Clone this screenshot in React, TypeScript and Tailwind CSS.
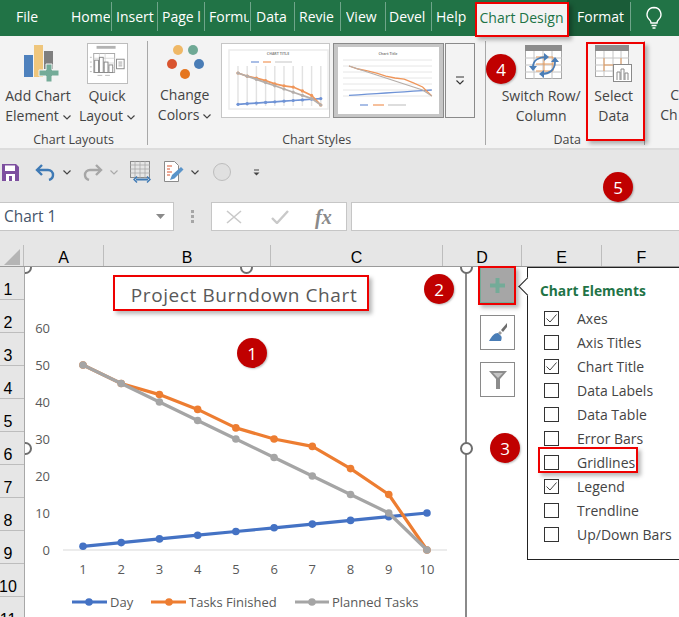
import React from "react";

const tabs: [string, number, number][] = [
  ["File", 16, 30],
  ["Home", 71, 39],
  ["Insert", 116, 40],
  ["Page l", 162, 41],
  ["Formu", 209, 40],
  ["Data", 256, 37],
  ["Revie", 299, 40],
  ["View", 346, 38],
  ["Devel", 389, 41],
  ["Help", 436, 38],
];

function Badge({ n, x, y }: { n: number; x: number; y: number }) {
  return (
    <div
      className="absolute w-[30px] h-[30px] rounded-full bg-[#c00000] text-white flex items-center justify-center text-[17px] leading-none shadow-[1px_1px_2px_rgba(0,0,0,0.25)]"
      style={{ left: x - 15, top: y - 15 }}
    >
      {n}
    </div>
  );
}

function RedBox({ x, y, w, h }: { x: number; y: number; w: number; h: number }) {
  return (
    <div
      className="absolute border-[2px] border-[#ee0000] shadow-[3px_3px_4px_rgba(0,0,0,0.28)] pointer-events-none"
      style={{ left: x, top: y, width: w, height: h }}
    />
  );
}

function Thumb({ second }: { second?: boolean }) {
  const x0 = second ? 14 : 16;
  const step = 9.2;
  const zero = second ? 52 : 61;
  const k = second ? 0.6 : 0.64;
  const xs = [0, 1, 2, 3, 4, 5, 6, 7, 8, 9].map((i) => x0 + i * step);
  const o = [50, 45, 42, 38, 33, 30, 28, 22, 15, 0];
  const g = [50, 45, 40, 35, 30, 25, 20, 15, 10, 0];
  const d = [1, 2, 3, 4, 5, 6, 7, 8, 9, 10];
  const toY = (v: number) => zero - v * k;
  const pts = (a: number[]) => a.map((v, i) => `${xs[i]},${toY(v)}`).join(" ");
  const series: [number[], string][] = [
    [d, "#6f93d6"],
    [o, "#f0965a"],
    [g, "#b5aeaa"],
  ];
  return (
    <svg viewBox="0 0 107 73" className="block w-full h-full">
      {second ? (
        <g>
          <rect x="0" y="0" width="107" height="73" fill="#c6c6c6" />
          <rect x="3" y="3" width="101" height="67" fill="#fff" />
        </g>
      ) : (
        <rect x="7" y="6" width="99" height="59" fill="#fff" stroke="#ececec" strokeWidth="1.5" />
      )}
      <text x={second ? 53 : 56} y="11" textAnchor="middle" fontSize="3.6" fontWeight="700" fill="#888" fontFamily="Open Sans">
        {second ? "Chart Title" : "CHART TITLE"}
      </text>
      {!second &&
        xs.map((x) => <line key={x} x1={x} x2={x} y1="22" y2="62" stroke="#e2e2e2" strokeWidth="1.4" />)}
      {second &&
        [0, 1, 2, 3, 4, 5, 6].map((i) => (
          <line key={i} x1="8" x2="97" y1={52 - i * 6} y2={52 - i * 6} stroke="#e6e6e6" strokeWidth="1" />
        ))}
      {series.map(([a, c]) => (
        <g key={c}>
          <polyline points={pts(a)} fill="none" stroke={c} strokeWidth={second ? 1.3 : 1.7} />
          {!second && a.map((v, i) => <circle key={i} cx={xs[i]} cy={toY(v)} r="1.6" fill={c} />)}
        </g>
      ))}
      {!second && (
        <g>
          <line x1="29" x2="37" y1="18" y2="18" stroke="#6f93d6" strokeWidth="1.2" />
          <line x1="41" x2="49" y1="18" y2="18" stroke="#f0965a" strokeWidth="1.2" />
          <line x1="53" x2="70" y1="18" y2="18" stroke="#cfcfcf" strokeWidth="1.2" />
        </g>
      )}
      {second && (
        <g>
          <line x1="25" x2="33" y1="61" y2="61" stroke="#6f93d6" strokeWidth="1.2" />
          <line x1="38" x2="49" y1="61" y2="61" stroke="#f0965a" strokeWidth="1.2" />
          <line x1="53" x2="71" y1="61" y2="61" stroke="#bbb" strokeWidth="1" />
        </g>
      )}
    </svg>
  );
}

function Caret({ light }: { light?: boolean }) {
  return (
    <svg width="8" height="5" viewBox="0 0 8 5" className="inline-block ml-[4px] align-middle">
      <path d="M0.5 0.5 L4 4 L7.5 0.5" fill="none" stroke={light ? "#aaa" : "#444"} strokeWidth="1.2" />
    </svg>
  );
}

const rows = ["1", "2", "3", "4", "5", "6", "7", "8", "9", "10", "11"];
const cols: [string, number][] = [["A", 80], ["B", 167], ["C", 172], ["D", 79], ["E", 80], ["F", 80]];
const elements: [string, boolean][] = [
  ["Axes", true],
  ["Axis Titles", false],
  ["Chart Title", true],
  ["Data Labels", false],
  ["Data Table", false],
  ["Error Bars", false],
  ["Gridlines", false],
  ["Legend", true],
  ["Trendline", false],
  ["Up/Down Bars", false],
];

function Chart() {
  const X = (i: number) => 58 + i * 38.22;
  const Y = (v: number) => 283 - v * 3.7;
  const day = [1, 2, 3, 4, 5, 6, 7, 8, 9, 10];
  const done = [50, 45, 42, 38, 33, 30, 28, 22, 15, 0];
  const plan = [50, 45, 40, 35, 30, 25, 20, 15, 10, 0];
  const ser: [number[], string][] = [
    [day, "#4472c4"],
    [done, "#ed7d31"],
    [plan, "#a5a5a5"],
  ];
  const font = "Open Sans, sans-serif";
  return (
    <svg width="442" height="350" viewBox="0 0 442 350" className="block">
      {[0, 10, 20, 30, 40, 50, 60].map((v) => (
        <text key={v} x="25" y={Y(v) + 5} textAnchor="end" fontSize="13" fill="#595959" fontFamily={font}>
          {v}
        </text>
      ))}
      <line x1="38" x2="422" y1="283" y2="283" stroke="#d9d9d9" strokeWidth="1" />
      {day.map((d, i) => (
        <text key={d} x={X(i)} y="307" textAnchor="middle" fontSize="13" fill="#595959" fontFamily={font}>
          {d}
        </text>
      ))}
      {ser.map(([a, c]) => (
        <g key={c}>
          <polyline
            points={a.map((v, i) => `${X(i)},${Y(v)}`).join(" ")}
            fill="none"
            stroke={c}
            strokeWidth="3.2"
            strokeLinejoin="round"
          />
          {a.map((v, i) => (
            <circle key={i} cx={X(i)} cy={Y(v)} r="3.8" fill={c} />
          ))}
        </g>
      ))}
      {(
        [
          [47, 82, 64, "#4472c4", "Day", 85],
          [126, 161, 144, "#ed7d31", "Tasks Finished", 164],
          [270, 304, 287, "#a5a5a5", "Planned Tasks", 307],
        ] as [number, number, number, string, string, number][]
      ).map(([a, b, m, c, t, tx]) => (
        <g key={t}>
          <line x1={a} x2={b} y1="335" y2="335" stroke={c} strokeWidth="3.2" />
          <circle cx={m} cy="335" r="3.8" fill={c} />
          <text x={tx} y="340" fontSize="13" fill="#595959" fontFamily={font}>
            {t}
          </text>
        </g>
      ))}
    </svg>
  );
}

function Handle({ x, y }: { x: number; y: number }) {
  return (
    <div
      className="absolute w-[13px] h-[13px] rounded-full bg-white border-[2px] border-[#6e6e6e]"
      style={{ left: x - 6.5, top: y - 6.5 }}
    />
  );
}

export default function App() {
  return (
    <div className="relative w-[679px] h-[617px] overflow-hidden bg-[#e6e6e6] font-['Open_Sans',sans-serif] text-[#444]">
      {/* Tabs */}
      <div className="relative h-[36px] bg-[#217346] text-white text-[14px] leading-[34px]">
        {tabs.map(([t, x, w]) => (
          <div key={t} className="absolute top-0 overflow-hidden whitespace-nowrap" style={{ left: x, width: w }}>
            {t}
          </div>
        ))}
        {[111, 157, 204, 250, 294, 340, 385, 431, 630].map((x) => (
          <div key={x} className="absolute top-[2px] h-[29px] w-px bg-[#6fa58a]" style={{ left: x }} />
        ))}
        <div className="absolute left-[476px] top-[2px] w-[91px] h-[34px] bg-[#f3f3f3] text-[#217346] text-center whitespace-nowrap leading-[32px]">
          Chart Design
        </div>
        <div className="absolute left-[567px] top-0 w-[63px] h-[36px] bg-[#1a5c38] pl-[10px]">Format</div>
        <svg className="absolute left-[645px] top-[6px]" width="18" height="24" viewBox="0 0 18 24">
          <path
            d="M9 1.5a7 7 0 0 0-4.5 12.3c1 .9 1.5 2 1.5 3.2h6c0-1.2.5-2.3 1.5-3.2A7 7 0 0 0 9 1.5z"
            fill="none"
            stroke="#fff"
            strokeWidth="1.4"
          />
          <path d="M6.5 19.5h5M7.5 22h3" stroke="#fff" strokeWidth="1.4" />
        </svg>
      </div>

      {/* Ribbon */}
      <div className="h-[114px] bg-[#f3f3f3] border-b-[2px] border-[#dcdcdc] flex text-[14px] leading-[20px] text-[#444]">
        {/* Chart layouts */}
        <div className="w-[149px] h-[104px] mt-[5px] border-r-[1px] border-[#a8a8a8] flex flex-col">
          <div className="flex h-[88px] shrink-0">
            <div className="w-[76px] flex flex-col items-center">
              <svg width="38" height="38" viewBox="0 0 38 38" className="shrink-0 mt-[3px] ml-[5px] mb-[4px]">
                <rect x="2" y="11" width="9" height="22" fill="#4e81bd" />
                <rect x="12" y="1" width="9" height="32" fill="#efc67c" />
                <rect x="22" y="7" width="9" height="18" fill="#7f7f7f" />
                <path d="M24 20h6v6h7v6h-7v6h-6v-6h-7v-6h7z" fill="#74ab98" stroke="#f3f3f3" strokeWidth="1" />
              </svg>
              <div className="text-center whitespace-nowrap">
                Add Chart
                <br />
                Element
                <Caret />
              </div>
            </div>
            <div className="w-[62px] flex flex-col items-center">
              <svg width="41" height="41" viewBox="0 0 41 41" className="shrink-0 mt-[2px] mb-[2px] bg-white border border-[#bdbdbd]">
                <rect x="9" y="2" width="20" height="3" fill="#b3b3b3" />
                <rect x="6" y="10" width="22" height="20" fill="#fff" stroke="#a8a8a8" />
                <path d="M6 15h22M6 20h22M6 25h22M12 10v20M18 10v20" stroke="#cfcfcf" strokeWidth="0.8" />
                <rect x="7" y="17" width="4" height="13" fill="#fff" stroke="#888" />
                <rect x="12" y="14" width="4" height="16" fill="#fff" stroke="#888" />
                <rect x="17" y="19" width="4" height="11" fill="#fff" stroke="#888" />
                <rect x="22" y="22" width="4" height="8" fill="#fff" stroke="#888" />
                <rect x="30" y="16" width="8" height="10" fill="#fff" stroke="#888" />
                <path d="M32 19h4M32 21h4M32 23h4" stroke="#888" strokeWidth="0.8" />
                <path d="M2 14h2M2 19h2M2 24h2M2 29h2M10 33h5M18 33h5" stroke="#bbb" strokeWidth="1" />
              </svg>
              <div className="text-center whitespace-nowrap">
                Quick
                <br />
                Layout
                <Caret />
              </div>
            </div>
          </div>
          <div className="text-[12.5px] text-center mt-[1px]">Chart Layouts</div>
        </div>

        {/* Chart styles */}
        <div className="w-[340px] h-[104px] mt-[5px] border-r-[1px] border-[#a8a8a8] flex flex-col">
          <div className="flex h-[88px] shrink-0">
            <div className="w-[73px] flex flex-col items-center">
              <svg width="40" height="36" viewBox="0 0 40 36" className="shrink-0 mt-[3px] mb-[5px]">
                <circle cx="13" cy="6" r="5" fill="#efb866" />
                <circle cx="28" cy="6" r="5" fill="#6fa995" />
                <circle cx="7" cy="20" r="5" fill="#d9542f" />
                <circle cx="34" cy="20" r="5" fill="#4a7db6" />
                <circle cx="20" cy="30" r="5" fill="#e5761e" />
              </svg>
              <div className="text-center whitespace-nowrap">
                Change
                <br />
                Colors
                <Caret />
              </div>
            </div>
            <div className="w-[109px] h-[75px] mt-[2px] bg-white border border-[#c6c6c6]">
              <Thumb />
            </div>
            <div className="w-[111px] h-[75px] mt-[2px] ml-[3px] bg-[#c6c6c6] border border-[#8a8a8a]">
              <Thumb second />
            </div>
            <div className="w-[30px] h-[75px] mt-[2px] ml-[1px] bg-[#f3f3f3] border border-[#8a8a8a] flex items-center justify-center">
              <svg width="10" height="10" viewBox="0 0 10 10">
                <path d="M1 1h8" stroke="#333" strokeWidth="1" />
                <path d="M1.5 4.5 L5 8 L8.5 4.5" fill="none" stroke="#333" strokeWidth="1.1" />
              </svg>
            </div>
          </div>
          <div className="text-[12.5px] text-center mt-[1px]">Chart Styles</div>
        </div>

        {/* Data */}
        <div className="w-[159px] h-[104px] mt-[5px] border-r-[1px] border-[#a8a8a8] flex flex-col">
          <div className="flex h-[88px] shrink-0">
            <div className="w-[98px] flex flex-col items-center">
              <svg width="38" height="35" viewBox="0 0 38 35" className="shrink-0 mt-[4px] mb-[6px] ml-[18px]">
                <rect x="0.5" y="0.5" width="36" height="33" fill="#fff" stroke="#a8a8a8" />
                <rect x="0" y="0" width="37" height="6" fill="#8c8c8c" />
                <path d="M9 6v28M18 6v28M27 6v28M0 13h37M0 20h37M0 27h37" stroke="#c4c4c4" strokeWidth="1" />
                <path d="M11 12h17v14H11M19 12v14M11 19h17" fill="none" stroke="#e39a5d" strokeWidth="1" />
                <path d="M8 22C8 15 14 12 21 12M17 29c7 0 13-4 13-12" fill="none" stroke="#4a7db6" strokeWidth="1.8" />
                <path d="M19 8l5 4-5 4zM4 21l4 5 4-5zM19 25l-5 4 5 4zM26 17l4-5 4 5z" fill="#4a7db6" />
              </svg>
              <div className="text-center whitespace-nowrap ml-[12px]">
                Switch Row/
                <br />
                Column
              </div>
            </div>
            <div className="w-[60px] flex flex-col items-center">
              <svg width="38" height="38" viewBox="0 0 38 38" className="shrink-0 mt-[4px] mb-[3px]">
                <rect x="0.5" y="0.5" width="33" height="31" fill="#fff" stroke="#a8a8a8" />
                <rect x="0" y="0" width="34" height="6" fill="#8c8c8c" />
                <path d="M9 6v26M18 6v26M26 6v26M0 13h34M0 20h34M0 26h34" stroke="#c4c4c4" strokeWidth="1" />
                <path d="M9 13v13M9 20h17M26 13v7" fill="none" stroke="#e39a5d" strokeWidth="1" />
                <rect x="18.5" y="19.5" width="18" height="17" fill="#fff" stroke="#8a8a8a" />
                <path d="M22 35v-8h3v8M26 35V24h3v11M30 35v-7h3v7" fill="none" stroke="#8a8a8a" strokeWidth="1" />
              </svg>
              <div className="text-center whitespace-nowrap -ml-[1px]">
                Select
                <br />
                Data
              </div>
            </div>
          </div>
          <div className="text-[12.5px] text-center mt-[1px] pl-[4px]">Data</div>
        </div>

        <div className="pl-[15px] pt-[49px] whitespace-nowrap">
          <div className="pl-[10px]">C</div>
          <div>Ch</div>
        </div>
      </div>

      {/* Quick access */}
      <div className="h-[52px] flex items-center pb-[8px] pl-[2px]">
        <svg width="17" height="17" viewBox="0 0 17 17">
          <path d="M0 0h14l3 3v14H0z" fill="#7d4f9f" />
          <rect x="3" y="1.5" width="10" height="5.5" fill="#fff" />
          <rect x="4" y="10" width="9" height="7" fill="#fff" />
          <rect x="7" y="12" width="3" height="5" fill="#7d4f9f" />
        </svg>
        <svg width="22" height="18" viewBox="0 0 22 18" className="ml-[16px]">
          <path d="M7 2L2 7l5 5" fill="none" stroke="#3f7ab5" strokeWidth="2.4" />
          <path d="M3 7h10a5 5 0 0 1 5 5c0 2-1 4-4 5" fill="none" stroke="#3f7ab5" strokeWidth="2.4" />
        </svg>
        <span className="ml-[2px] flex"><Caret /></span>
        <svg width="22" height="18" viewBox="0 0 22 18" className="ml-[10px]">
          <path d="M15 2l5 5-5 5" fill="none" stroke="#a6a6a6" strokeWidth="2.4" />
          <path d="M19 7H9a5 5 0 0 0-5 5c0 2 1 4 4 5" fill="none" stroke="#a6a6a6" strokeWidth="2.4" />
        </svg>
        <span className="ml-[3px] flex"><Caret light /></span>
        <svg width="22" height="22" viewBox="0 0 22 22" className="ml-[12px]">
          <rect x="0.5" y="0.5" width="19" height="16" fill="none" stroke="#8a8a8a" />
          <path d="M0 4h20M0 8h20M0 12h20M5 0v17M10 0v17M15 0v17" stroke="#a8a8a8" strokeWidth="0.8" />
          <path d="M6 18.5h12" stroke="#3f7ab5" strokeWidth="2" />
          <path d="M7 15.5l-3 3 3 3M17 15.5l3 3-3 3" fill="none" stroke="#3f7ab5" strokeWidth="1.4" />
        </svg>
        <svg width="20" height="22" viewBox="0 0 20 22" className="ml-[12px]">
          <path d="M0.5 0.5h10l4 4v16H0.5z" fill="#fff" stroke="#8a8a8a" />
          <path d="M3 5h5M3 8h3M3 11h5M3 14h3" stroke="#d9542f" strokeWidth="1" />
          <path d="M6 19l2-5 9-8 2.5 2.5-9 9z" fill="#5a94c9" />
        </svg>
        <span className="ml-[3px] flex"><Caret /></span>
        <div className="ml-[14px] w-[18px] h-[18px] rounded-full bg-[#e0e0e0] border border-[#bdbdbd]" />
        <svg width="7" height="7" viewBox="0 0 7 7" className="ml-[22px]">
          <path d="M1 1h5" stroke="#444" strokeWidth="1" />
          <path d="M0.5 3.5h6L3.5 6.5z" fill="#444" />
        </svg>
      </div>

      {/* Formula bar */}
      <div className="h-[29px] flex text-[15.4px]">
        <div className="w-[174px] h-[29px] bg-white border border-l-0 border-[#c6c6c6] flex items-center justify-between pl-[4px] pr-[8px] text-[#44546a]">
          Chart 1
          <svg width="9" height="5" viewBox="0 0 9 5"><path d="M0 0h9L4.5 5z" fill="#8a8a8a" /></svg>
        </div>
        <div className="w-[37px] flex flex-col items-center justify-center gap-[2px]">
          <div className="w-[3px] h-[3px] bg-[#a6a6a6]" />
          <div className="w-[3px] h-[3px] bg-[#a6a6a6]" />
          <div className="w-[3px] h-[3px] bg-[#a6a6a6]" />
        </div>
        <div className="w-[136px] bg-white border border-[#c6c6c6] flex items-center">
          <svg width="16" height="14" viewBox="0 0 16 14" className="ml-[14px]">
            <path d="M1 1l14 12M15 1L1 13" stroke="#c9c9c9" strokeWidth="1.6" />
          </svg>
          <svg width="18" height="14" viewBox="0 0 18 14" className="ml-[29px]">
            <path d="M1 8l5 5L17 1" fill="none" stroke="#c9c9c9" strokeWidth="2.4" />
          </svg>
          <span className="ml-[26px] font-['Liberation_Serif',serif] italic font-bold text-[20px] text-[#8a8a8a]">fx</span>
        </div>
        <div className="w-[1px] ml-[3px]" />
        <div className="flex-1 bg-white border border-r-0 border-[#c6c6c6]" />
      </div>

      {/* Column headers */}
      <div className="h-[36px] pt-[14px] flex items-stretch border-b-[1px] border-[#9a9a9a]">
        <div className="w-[24px] shrink-0 h-[21px] relative border-r border-[#bdbdbd]">
          <div className="absolute right-[3px] bottom-[1px] w-0 h-0 border-l-[16px] border-l-transparent border-b-[16px] border-b-[#b5b5b5]" />
        </div>
        {cols.map(([c, w]) => (
          <div
            key={c}
            className="shrink-0 h-[21px] pt-[4px] flex items-center justify-center border-r border-[#bdbdbd] text-[16px] text-black font-['Liberation_Sans',sans-serif]"
            style={{ width: w }}
          >
            {c}
          </div>
        ))}
      </div>

      {/* Sheet */}
      <div className="flex h-[350px]">
        <div className="w-[25px] shrink-0 bg-[#e6e6e6] border-r border-[#a8a8a8] overflow-hidden">
          {rows.map((r) => (
            <div
              key={r}
              className="h-[33px] border-b border-[#bdbdbd] flex items-center justify-center pt-[13px] pr-[8px] text-[16px] text-black font-['Liberation_Sans',sans-serif]"
            >
              {r}
            </div>
          ))}
        </div>
        <div className="relative flex-1 bg-white overflow-hidden">
          <div className="absolute left-0 top-0 w-[442px] h-[350px] border-r-[2px] border-[#8a8a8a]">
            <Chart />
            <div className="absolute left-[94px] top-[10px] w-[250px] text-center text-[19px] tracking-[0.6px] text-[#595959] leading-[36px] whitespace-nowrap">
              Project Burndown Chart
            </div>
          </div>
          <Handle x={0} y={0} />
          <Handle x={221} y={0} />
          <Handle x={441} y={0} />
          <Handle x={0} y={181} />
          <Handle x={441} y={181} />

          {/* chart buttons */}
          <div className="absolute left-[455px] top-0 w-[35px] flex flex-col gap-[12px]">
            <div className="h-[36px] bg-[#a6a6a6] border border-[#74ab98] flex items-center justify-center">
              <svg width="15" height="15" viewBox="0 0 15 15">
                <path d="M5.5 0h4v5.5H15v4H9.5V15h-4V9.5H0v-4h5.5z" fill="#74ab98" />
              </svg>
            </div>
            <div className="h-[35px] bg-white border border-[#8a8a8a] flex items-center justify-center">
              <svg width="20" height="20" viewBox="0 0 20 20">
                <path d="M19 0l-6 7 2 2 4-5z" fill="#6d6d6d" />
                <path d="M12 8l2 2-2 2-2-2z" fill="#9a9a9a" />
                <path d="M10 10c-4 0-6 3-9 8h12c1-3 1-5-1-6z" fill="#4a7db6" />
              </svg>
            </div>
            <div className="h-[35px] bg-white border border-[#8a8a8a] flex items-center justify-center">
              <svg width="18" height="18" viewBox="0 0 18 18">
                <path d="M0 0h18l-7 8v10H7V8z" fill="#8c8c8c" />
                <path d="M4 2h10l-5 5z" fill="#c4c4c4" />
              </svg>
            </div>
          </div>

          {/* popup */}
          <div className="absolute left-[502px] top-0 w-[180px] h-[293px] bg-white border border-[#222] pl-[12px] pt-[13px] text-[14px] text-[#444]">
            <div className="text-[13.8px] font-bold text-[#217346] leading-[20px] mb-[5px] whitespace-nowrap">Chart Elements</div>
            {elements.map(([t, on]) => (
              <div key={t} className="h-[24px] flex items-center">
                <div className="ml-[4px] w-[15px] h-[15px] border border-[#333] flex items-center justify-center shrink-0">
                  {on && (
                    <svg width="11" height="9" viewBox="0 0 11 9">
                      <path d="M0.5 4.5l3.5 3.5L10.5 0.5" fill="none" stroke="#444" strokeWidth="1" />
                    </svg>
                  )}
                </div>
                <span className="ml-[18px] whitespace-nowrap">{t}</span>
              </div>
            ))}
          </div>
          <div className="absolute left-[495.5px] top-[12.5px] w-[13px] h-[13px] bg-white border-l border-b border-[#222] rotate-45" />
        </div>
      </div>

      {/* annotations */}
      <RedBox x={475} y={2} w={94} h={35} />
      <RedBox x={586} y={42} w={59} h={99} />
      <RedBox x={113} y={275} w={256} h={36} />
      <RedBox x={478} y={266} w={38} h={39} />
      <RedBox x={538} y={447} w={100} h={26} />
      <Badge n={1} x={252} y={353} />
      <Badge n={2} x={439} y={289} />
      <Badge n={3} x={505} y={448} />
      <Badge n={4} x={501} y={69} />
      <Badge n={5} x={618} y={187} />
    </div>
  );
}
